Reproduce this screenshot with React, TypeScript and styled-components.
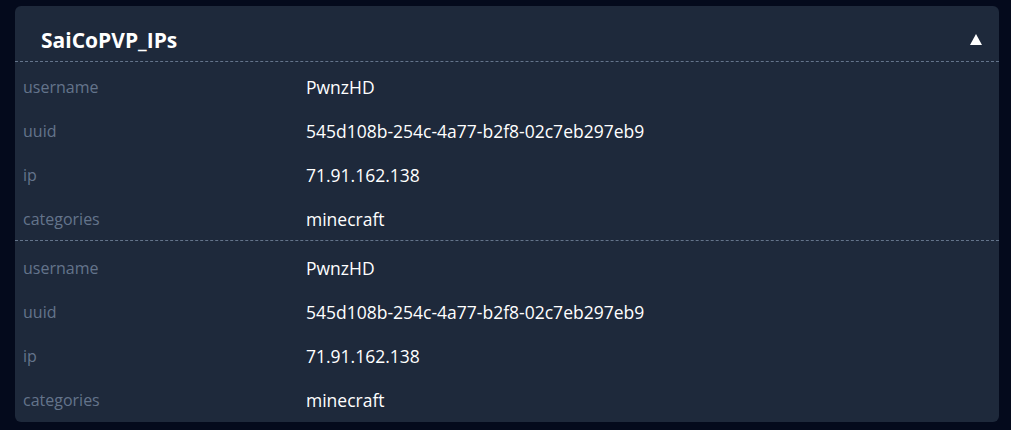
import React from "react";
import styled, { createGlobalStyle } from "styled-components";

const Global = createGlobalStyle`
  html, body { margin: 0; padding: 0; background: #040a1c; }
  body { font-family: "Open Sans", "Noto Sans", sans-serif; }
  *, *::before, *::after { box-sizing: border-box; }
`;

const Page = styled.div`
  padding: 6px 12px 9px 15px;
`;

const Card = styled.section`
  background: #1e293b;
  border-radius: 6px;
  overflow: hidden;
`;

const Header = styled.header`
  display: flex;
  align-items: center;
  justify-content: space-between;
  height: 56px;
  padding: 14px 17px 0 26px;
  border-bottom: 1px dashed #64748b;
`;

const Title = styled.h2`
  margin: 0;
  color: #ffffff;
  font-size: 21px;
  font-weight: 700;
  line-height: 41px;
`;

const Toggle = styled.span`
  display: block;
  width: 0;
  height: 0;
  border-left: 6px solid transparent;
  border-right: 6px solid transparent;
  border-bottom: 11px solid #ffffff;
  margin-top: -3px;
`;

const Group = styled.div<{ $top: number; $last?: boolean }>`
  padding-top: ${(p) => p.$top}px;
  padding-bottom: ${(p) => (p.$last ? 1 : 0)}px;
  border-bottom: ${(p) => (p.$last ? "none" : "1px dashed #64748b")};
`;

const Row = styled.div`
  display: grid;
  grid-template-columns: 283px 1fr;
  align-items: center;
  height: 44px;
  padding: 2px 8px 0;
`;

const Label = styled.span`
  color: #64748b;
  font-size: 16px;
`;

const Value = styled.span`
  color: #ffffff;
  font-size: 17.5px;
`;

const entries = [
  { username: "PwnzHD", uuid: "545d108b-254c-4a77-b2f8-02c7eb297eb9", ip: "71.91.162.138", categories: "minecraft" },
  { username: "PwnzHD", uuid: "545d108b-254c-4a77-b2f8-02c7eb297eb9", ip: "71.91.162.138", categories: "minecraft" },
];

export default function App() {
  return (
    <>
      <Global />
      <Page>
        <Card>
          <Header>
            <Title>SaiCoPVP_IPs</Title>
            <Toggle aria-label="collapse" />
          </Header>
          {entries.map((e, i) => (
            <Group key={i} $top={i === 0 ? 2 : 4} $last={i === entries.length - 1}>
              {(Object.keys(e) as (keyof typeof e)[]).map((k) => (
                <Row key={k}>
                  <Label>{k}</Label>
                  <Value>{e[k]}</Value>
                </Row>
              ))}
            </Group>
          ))}
        </Card>
      </Page>
    </>
  );
}
